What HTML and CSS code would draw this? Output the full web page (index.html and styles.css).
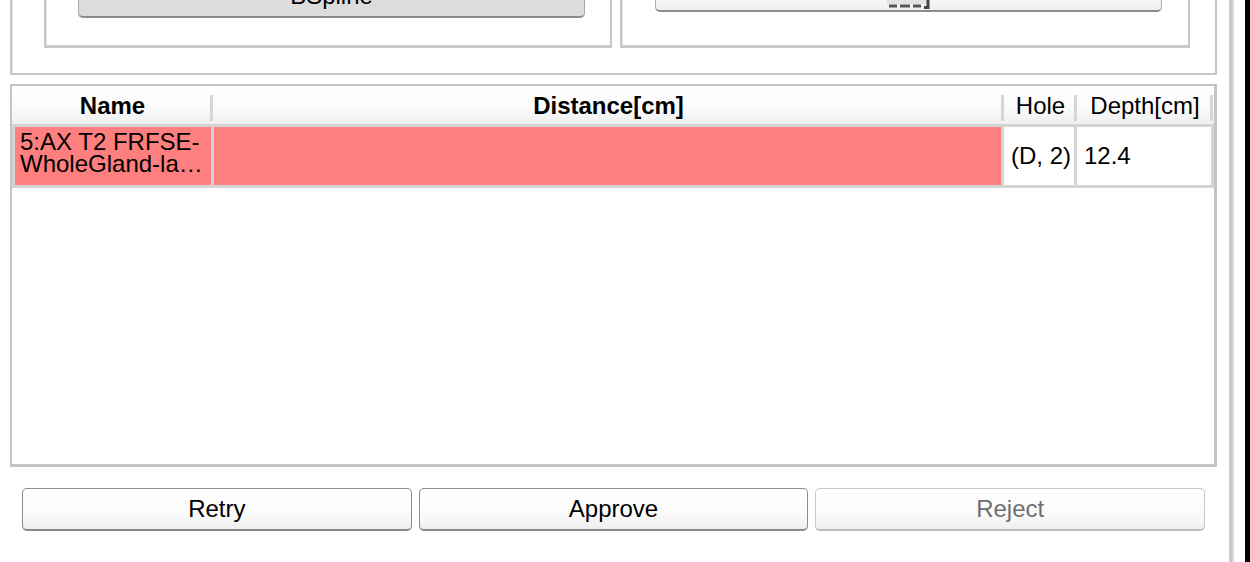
FILE: index.html
```html
<!DOCTYPE html>
<html>
<head>
<meta charset="utf-8">
<link rel="stylesheet" href="styles.css">
</head>
<body>
<div class="app">
  <div class="main">
    <section class="group outer">
      <div class="group inner inner-left">
        <button class="btn btn-checked">BSpline</button>
      </div>
      <div class="group inner inner-right">
        <button class="btn btn-tool">
          <svg class="tool-icon" width="48" height="30" viewBox="0 0 48 30">
            <rect x="2" y="0" width="40" height="24" fill="#e2e2e2"/>
            <path d="M4 26 H12 M15 26 H25 M28 26 H36" stroke="#555" stroke-width="3" fill="none"/>
            <path d="M43 12 V27.5 H39" stroke="#444" stroke-width="3" fill="none"/>
          </svg>
        </button>
      </div>
    </section>

    <section class="tablebox">
      <div class="thead">
        <div class="th th-bold">Name</div>
        <div class="th th-bold">Distance[cm]</div>
        <div class="th">Hole</div>
        <div class="th">Depth[cm]</div>
      </div>
      <div class="trow">
        <div class="td td-hit td-name">5:AX T2 FRFSE-<br>WholeGland-la…</div>
        <div class="td td-hit"></div>
        <div class="td">(D, 2)</div>
        <div class="td">12.4</div>
      </div>
    </section>

    <div class="actions">
      <button class="btn btn-action">Retry</button>
      <button class="btn btn-action">Approve</button>
      <button class="btn btn-action btn-disabled" disabled>Reject</button>
    </div>
  </div>
  <div class="splitter"></div>
  <div class="edge"></div>
</div>
</body>
</html>
```

FILE: styles.css
```css
* { box-sizing: border-box; }

html, body {
  margin: 0;
  padding: 0;
  background: #ffffff;
}

body {
  width: 1250px;
  height: 562px;
  overflow: hidden;
  font-family: "Liberation Sans", Arial, sans-serif;
  font-size: 24px;
  color: #000;
}

.app {
  display: flex;
  height: 562px;
}

.main {
  width: 1217px;
  padding-left: 10px;
  flex: none;
}

.group {
  border: 2px solid #c6c6c6;
  box-shadow: inset 1px 1px 0 #e2e2e2;
}

.outer {
  margin-top: -40px;
  height: 115px;
  display: flex;
  align-items: flex-end;
  gap: 8px;
  padding: 0 0 25px 32px;
}

.inner {
  height: 92px;
  display: flex;
  align-items: flex-end;
  border-width: 2px 2px 3px 2px;
  border-bottom-color: #cacaca;
}

.inner-left {
  width: 568px;
  padding: 0 0 27px 32px;
}

.inner-right {
  width: 570px;
  padding: 0 0 33px 33px;
}

.btn {
  font-family: "Liberation Sans", Arial, sans-serif;
  font-size: 24px;
  color: #000;
  height: 43px;
  border-radius: 5px;
  border: 1px solid #8d8d8d;
  border-bottom: 2px solid #8a8a8a;
  background: linear-gradient(#ffffff, #fbfbfb 60%, #efefef);
  padding: 0;
  display: flex;
  align-items: center;
  justify-content: center;
}

.btn-checked {
  width: 507px;
  background: #dcdcdc;
  border-color: #a8a8a8;
  border-bottom-color: #8c8c8c;
}

.btn-tool {
  width: 507px;
  border-color: #b0b0b0;
  border-bottom-color: #8c8c8c;
}

.tool-icon {
  display: block;
  flex: none;
  margin-top: 10px;
}

.tablebox {
  margin-top: 9px;
  height: 383px;
  border: 2px solid #c4c4c4;
  border-right-width: 3px;
  border-bottom-width: 3px;
}

.thead {
  display: grid;
  grid-template-columns: 201px 791px 73px 136px;
  height: 38px;
  background: linear-gradient(#ffffff, #fbfbfb 55%, #efefef);
}

.th {
  display: flex;
  align-items: center;
  justify-content: center;
  position: relative;
  padding-top: 2px;
}

.th::after {
  content: "";
  position: absolute;
  right: 0;
  top: 9px;
  bottom: 3px;
  width: 3px;
  background: #d6d6d6;
}

.th-bold {
  font-weight: bold;
}

.trow {
  display: grid;
  grid-template-columns: 196px 787px 70px 134px;
  column-gap: 3px;
  padding: 3px;
  background: #d4d4d4;
  height: 64px;
}

.td {
  background: #ffffff;
  display: flex;
  align-items: center;
  padding-left: 7px;
  white-space: nowrap;
}

.td-hit {
  background: #ff7f7f;
}

.td-name {
  padding-left: 5px;
  line-height: 22px;
  padding-bottom: 6px;
}

.actions {
  display: flex;
  gap: 7px;
  margin: 21px 12px 0 12px;
}

.btn-action {
  flex: 1;
}

.btn-disabled {
  color: #6f6f6f;
  border-color: #c8c8c8;
  border-bottom-color: #bdbdbd;
}

.splitter {
  width: 5px;
  margin-left: 12px;
  background: linear-gradient(90deg, #d0d0d0 0 1px, #c4c4c4 1px 3px, #d8d8d8 3px 5px);
  flex: none;
}

.edge {
  flex: 1;
  display: flex;
  justify-content: flex-end;
}

.edge::after {
  content: "";
  width: 5px;
  background: #000;
}
```
